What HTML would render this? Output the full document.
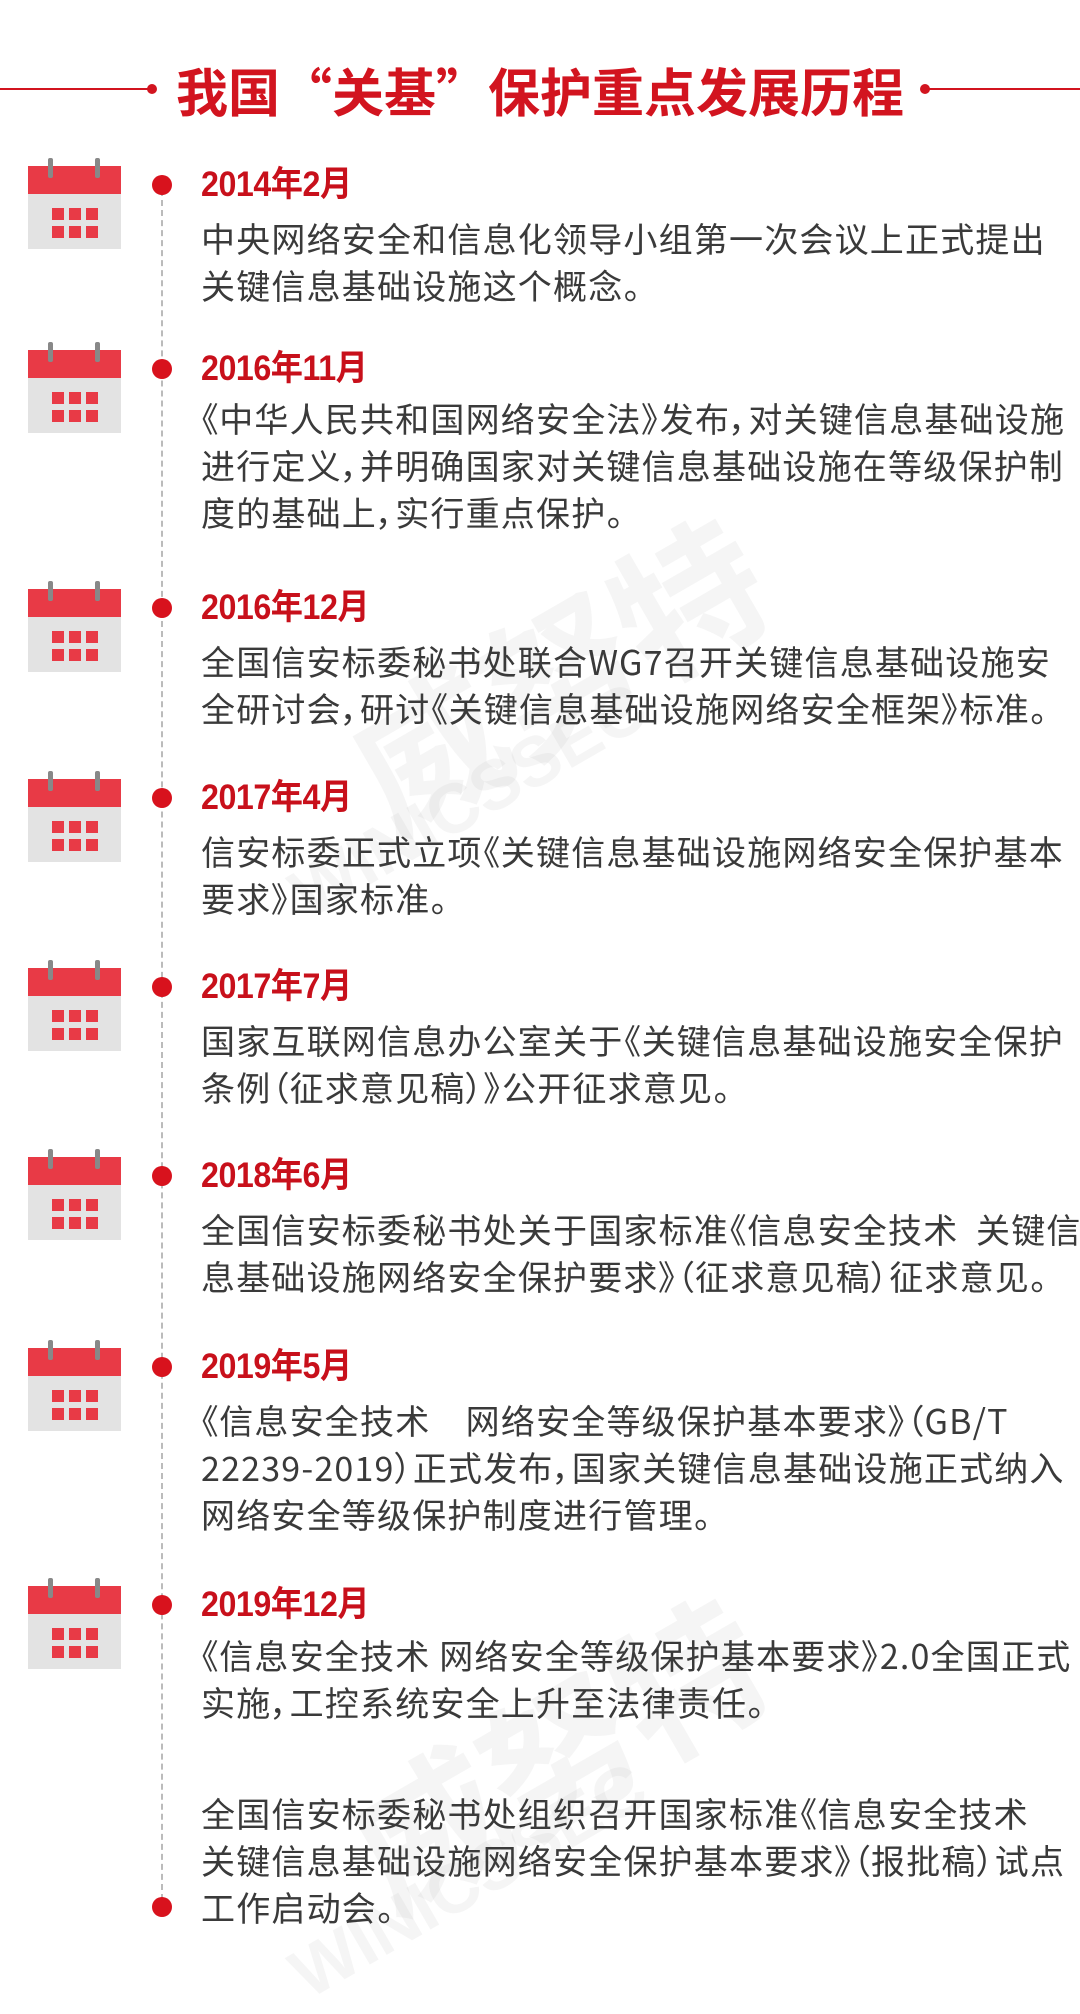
<!DOCTYPE html>
<html><head><meta charset="utf-8"><style>
*{margin:0;padding:0;box-sizing:border-box}
body{width:1080px;height:2001px;background:#fff;position:relative;overflow:hidden;font-family:"Liberation Sans","Noto Sans CJK SC",sans-serif}
.title{position:absolute;top:58px;left:0;width:1080px;text-align:center;font-size:52px;font-weight:bold;color:#d2141f;line-height:64px;letter-spacing:0px;font-family:"Noto Sans CJK SC",sans-serif}
.hl{position:absolute;top:88px;height:2px;background:#d2141f}
.hd{position:absolute;top:84px;width:10px;height:10px;border-radius:50%;background:#d2141f}
.vline{position:absolute;left:161px;top:190px;height:1720px;border-left:2px dashed #bbb}
.dot{position:absolute;left:152px;width:20px;height:20px;border-radius:50%;background:#d8121d}
.year{position:absolute;left:201px;font-size:35px;font-weight:bold;color:#c8101b;line-height:40px;transform:scaleX(0.92);transform-origin:left;letter-spacing:-0.5px}
.txt{position:absolute;left:201px;width:870px;font-size:34px;color:#3a3a3a;line-height:47px;letter-spacing:1.2px;white-space:nowrap;font-feature-settings:"palt";font-family:"Noto Sans CJK SC",sans-serif}
.cal{position:absolute;left:28px;width:93px;height:83px;background:#e3e3e3}
.cal .band{position:absolute;left:0;top:0;width:93px;height:28px;background:#e83a46}
.cal .r{position:absolute;top:-8px;width:5px;height:20px;background:#888;border-radius:2px}
.cal .g{position:absolute;width:12px;height:12px;background:#e83a46}
.wm{position:absolute;color:rgba(200,200,200,0.18);font-weight:bold;transform:rotate(-30deg);white-space:nowrap}
</style></head><body>
<div class="wm" style="left:330px;top:560px;font-size:150px">威努特</div>
<div class="wm" style="left:270px;top:760px;font-size:70px">WINICSSEC</div>
<div class="wm" style="left:330px;top:1640px;font-size:150px">威努特</div>
<div class="wm" style="left:270px;top:1840px;font-size:70px">WINICSSEC</div>

<div class="hl" style="left:0;width:148px"></div><div class="hd" style="left:147px"></div>
<div class="hl" style="left:925px;width:155px"></div><div class="hd" style="left:920px"></div>
<div class="title">我国“关基”保护重点发展历程</div>
<div class="vline"></div>

<div class="cal" style="top:166px"><div class="band"></div><div class="r" style="left:20px"></div><div class="r" style="left:67px"></div><div class="g" style="left:24px;top:42px"></div><div class="g" style="left:41px;top:42px"></div><div class="g" style="left:58px;top:42px"></div><div class="g" style="left:24px;top:60px"></div><div class="g" style="left:41px;top:60px"></div><div class="g" style="left:58px;top:60px"></div></div>
<div class="dot" style="top:175px"></div>
<div class="year" style="top:165px">2014年2月</div>
<div class="txt" style="top:214px">中央网络安全和信息化领导小组第一次会议上正式提出<br>关键信息基础设施这个概念。</div>

<div class="cal" style="top:350px"><div class="band"></div><div class="r" style="left:20px"></div><div class="r" style="left:67px"></div><div class="g" style="left:24px;top:42px"></div><div class="g" style="left:41px;top:42px"></div><div class="g" style="left:58px;top:42px"></div><div class="g" style="left:24px;top:60px"></div><div class="g" style="left:41px;top:60px"></div><div class="g" style="left:58px;top:60px"></div></div>
<div class="dot" style="top:359px"></div>
<div class="year" style="top:349px">2016年11月</div>
<div class="txt" style="top:394px">《中华人民共和国网络安全法》发布，对关键信息基础设施<br>进行定义，并明确国家对关键信息基础设施在等级保护制<br>度的基础上，实行重点保护。</div>

<div class="cal" style="top:589px"><div class="band"></div><div class="r" style="left:20px"></div><div class="r" style="left:67px"></div><div class="g" style="left:24px;top:42px"></div><div class="g" style="left:41px;top:42px"></div><div class="g" style="left:58px;top:42px"></div><div class="g" style="left:24px;top:60px"></div><div class="g" style="left:41px;top:60px"></div><div class="g" style="left:58px;top:60px"></div></div>
<div class="dot" style="top:598px"></div>
<div class="year" style="top:588px">2016年12月</div>
<div class="txt" style="top:637px">全国信安标委秘书处联合WG7召开关键信息基础设施安<br>全研讨会，研讨《关键信息基础设施网络安全框架》标准。</div>

<div class="cal" style="top:779px"><div class="band"></div><div class="r" style="left:20px"></div><div class="r" style="left:67px"></div><div class="g" style="left:24px;top:42px"></div><div class="g" style="left:41px;top:42px"></div><div class="g" style="left:58px;top:42px"></div><div class="g" style="left:24px;top:60px"></div><div class="g" style="left:41px;top:60px"></div><div class="g" style="left:58px;top:60px"></div></div>
<div class="dot" style="top:788px"></div>
<div class="year" style="top:778px">2017年4月</div>
<div class="txt" style="top:827px">信安标委正式立项《关键信息基础设施网络安全保护基本<br>要求》国家标准。</div>

<div class="cal" style="top:968px"><div class="band"></div><div class="r" style="left:20px"></div><div class="r" style="left:67px"></div><div class="g" style="left:24px;top:42px"></div><div class="g" style="left:41px;top:42px"></div><div class="g" style="left:58px;top:42px"></div><div class="g" style="left:24px;top:60px"></div><div class="g" style="left:41px;top:60px"></div><div class="g" style="left:58px;top:60px"></div></div>
<div class="dot" style="top:977px"></div>
<div class="year" style="top:967px">2017年7月</div>
<div class="txt" style="top:1016px">国家互联网信息办公室关于《关键信息基础设施安全保护<br>条例（征求意见稿）》公开征求意见。</div>

<div class="cal" style="top:1157px"><div class="band"></div><div class="r" style="left:20px"></div><div class="r" style="left:67px"></div><div class="g" style="left:24px;top:42px"></div><div class="g" style="left:41px;top:42px"></div><div class="g" style="left:58px;top:42px"></div><div class="g" style="left:24px;top:60px"></div><div class="g" style="left:41px;top:60px"></div><div class="g" style="left:58px;top:60px"></div></div>
<div class="dot" style="top:1166px"></div>
<div class="year" style="top:1156px">2018年6月</div>
<div class="txt" style="top:1205px">全国信安标委秘书处关于国家标准《信息安全技术&nbsp; 关键信<br>息基础设施网络安全保护要求》（征求意见稿）征求意见。</div>

<div class="cal" style="top:1348px"><div class="band"></div><div class="r" style="left:20px"></div><div class="r" style="left:67px"></div><div class="g" style="left:24px;top:42px"></div><div class="g" style="left:41px;top:42px"></div><div class="g" style="left:58px;top:42px"></div><div class="g" style="left:24px;top:60px"></div><div class="g" style="left:41px;top:60px"></div><div class="g" style="left:58px;top:60px"></div></div>
<div class="dot" style="top:1357px"></div>
<div class="year" style="top:1347px">2019年5月</div>
<div class="txt" style="top:1396px">《信息安全技术&nbsp;&nbsp;&nbsp; 网络安全等级保护基本要求》（GB/T<br>22239-2019）正式发布，国家关键信息基础设施正式纳入<br>网络安全等级保护制度进行管理。</div>

<div class="cal" style="top:1586px"><div class="band"></div><div class="r" style="left:20px"></div><div class="r" style="left:67px"></div><div class="g" style="left:24px;top:42px"></div><div class="g" style="left:41px;top:42px"></div><div class="g" style="left:58px;top:42px"></div><div class="g" style="left:24px;top:60px"></div><div class="g" style="left:41px;top:60px"></div><div class="g" style="left:58px;top:60px"></div></div>
<div class="dot" style="top:1595px"></div>
<div class="year" style="top:1585px">2019年12月</div>
<div class="txt" style="top:1631px">《信息安全技术 网络安全等级保护基本要求》2.0全国正式<br>实施，工控系统安全上升至法律责任。</div>
<div class="txt" style="top:1789px">全国信安标委秘书处组织召开国家标准《信息安全技术<br>关键信息基础设施网络安全保护基本要求》（报批稿）试点<br>工作启动会。</div>
<div class="dot" style="top:1897px"></div>
</body></html>
